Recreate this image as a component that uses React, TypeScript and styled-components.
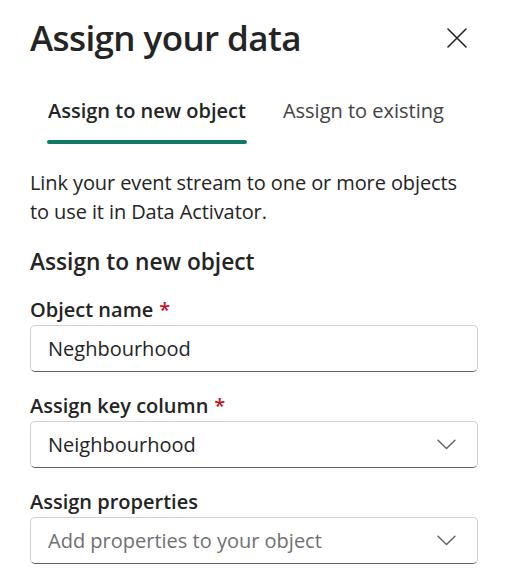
import React from "react";
import styled, { createGlobalStyle } from "styled-components";

const Global = createGlobalStyle`
  html, body { margin: 0; padding: 0; background: #ffffff; }
  body { font-family: "Open Sans", "Noto Sans", sans-serif; color: #242424; }
  * { box-sizing: border-box; }
`;

const Panel = styled.div`
  width: 507px;
  padding: 14px 29px 0 30px;
  display: flex;
  flex-direction: column;
`;

const Header = styled.div`
  display: flex;
  align-items: center;
  justify-content: space-between;
`;

const Title = styled.h1`
  margin: 0;
  font-size: 35px;
  line-height: 48px;
  font-weight: 600;
  letter-spacing: -0.6px;
  color: #242424;
`;

const CloseButton = styled.button`
  border: none;
  background: transparent;
  padding: 0;
  margin-right: 11px;
  width: 20px;
  height: 20px;
  display: flex;
  align-items: center;
  justify-content: center;
  cursor: pointer;
`;

const TabList = styled.div`
  display: flex;
  margin-top: 35px;
`;

const Tab = styled.div<{ $selected?: boolean }>`
  position: relative;
  padding: 0 19px 19px 18px;
  font-size: 20px;
  line-height: 28px;
  font-weight: ${(p) => (p.$selected ? 600 : 400)};
  color: ${(p) => (p.$selected ? "#242424" : "#424242")};
  &::after {
    content: "";
    display: ${(p) => (p.$selected ? "block" : "none")};
    position: absolute;
    left: 17px;
    right: 18px;
    bottom: 0;
    height: 4px;
    border-radius: 2px;
    background: #117865;
  }
`;

const Description = styled.p`
  margin: 24px 0 0;
  font-size: 20px;
  line-height: 29px;
  letter-spacing: -0.1px;
  color: #242424;
`;

const SectionHeading = styled.h2`
  margin: 20px 0 0;
  font-size: 22.7px;
  line-height: 32px;
  font-weight: 600;
  color: #242424;
`;

const Field = styled.div`
  display: flex;
  flex-direction: column;
  margin-top: 18px;
  & + & {
    margin-top: 20px;
  }
`;

const Label = styled.label`
  font-size: 20px;
  line-height: 28px;
  font-weight: 600;
  color: #242424;
  margin-bottom: 1px;
`;

const Required = styled.span`
  color: #c50f1f;
  margin-left: 6px;
  font-weight: 600;
`;

const Box = styled.div`
  height: 47px;
  border: 1px solid #d1d1d1;
  border-bottom-color: #616161;
  border-radius: 5px;
  display: flex;
  align-items: center;
  justify-content: space-between;
  padding: 0 21px 0 17px;
  background: #ffffff;
`;

const Value = styled.span<{ $placeholder?: boolean }>`
  font-size: 20px;
  color: ${(p) => (p.$placeholder ? "#707070" : "#242424")};
`;

const Chevron = () => (
  <svg width="19" height="11" viewBox="0 0 19 11" fill="none">
    <path d="M1 1.2 L9.5 9.5 L18 1.2" stroke="#616161" strokeWidth="1.4" strokeLinecap="round" strokeLinejoin="round" />
  </svg>
);

const CloseIcon = () => (
  <svg width="20" height="20" viewBox="0 0 20 20" fill="none">
    <path d="M1 1 L19 19 M19 1 L1 19" stroke="#242424" strokeWidth="1.6" strokeLinecap="round" />
  </svg>
);

export default function App() {
  return (
    <>
      <Global />
      <Panel>
        <Header>
          <Title>Assign your data</Title>
          <CloseButton aria-label="Close">
            <CloseIcon />
          </CloseButton>
        </Header>
        <TabList>
          <Tab $selected>Assign to new object</Tab>
          <Tab>Assign to existing</Tab>
        </TabList>
        <Description>
          Link your event stream to one or more objects to use it in Data Activator.
        </Description>
        <SectionHeading>Assign to new object</SectionHeading>
        <Field>
          <Label>
            Object name<Required>*</Required>
          </Label>
          <Box>
            <Value>Neghbourhood</Value>
          </Box>
        </Field>
        <Field>
          <Label>
            Assign key column<Required>*</Required>
          </Label>
          <Box>
            <Value>Neighbourhood</Value>
            <Chevron />
          </Box>
        </Field>
        <Field>
          <Label>Assign properties</Label>
          <Box>
            <Value $placeholder>Add properties to your object</Value>
            <Chevron />
          </Box>
        </Field>
      </Panel>
    </>
  );
}
